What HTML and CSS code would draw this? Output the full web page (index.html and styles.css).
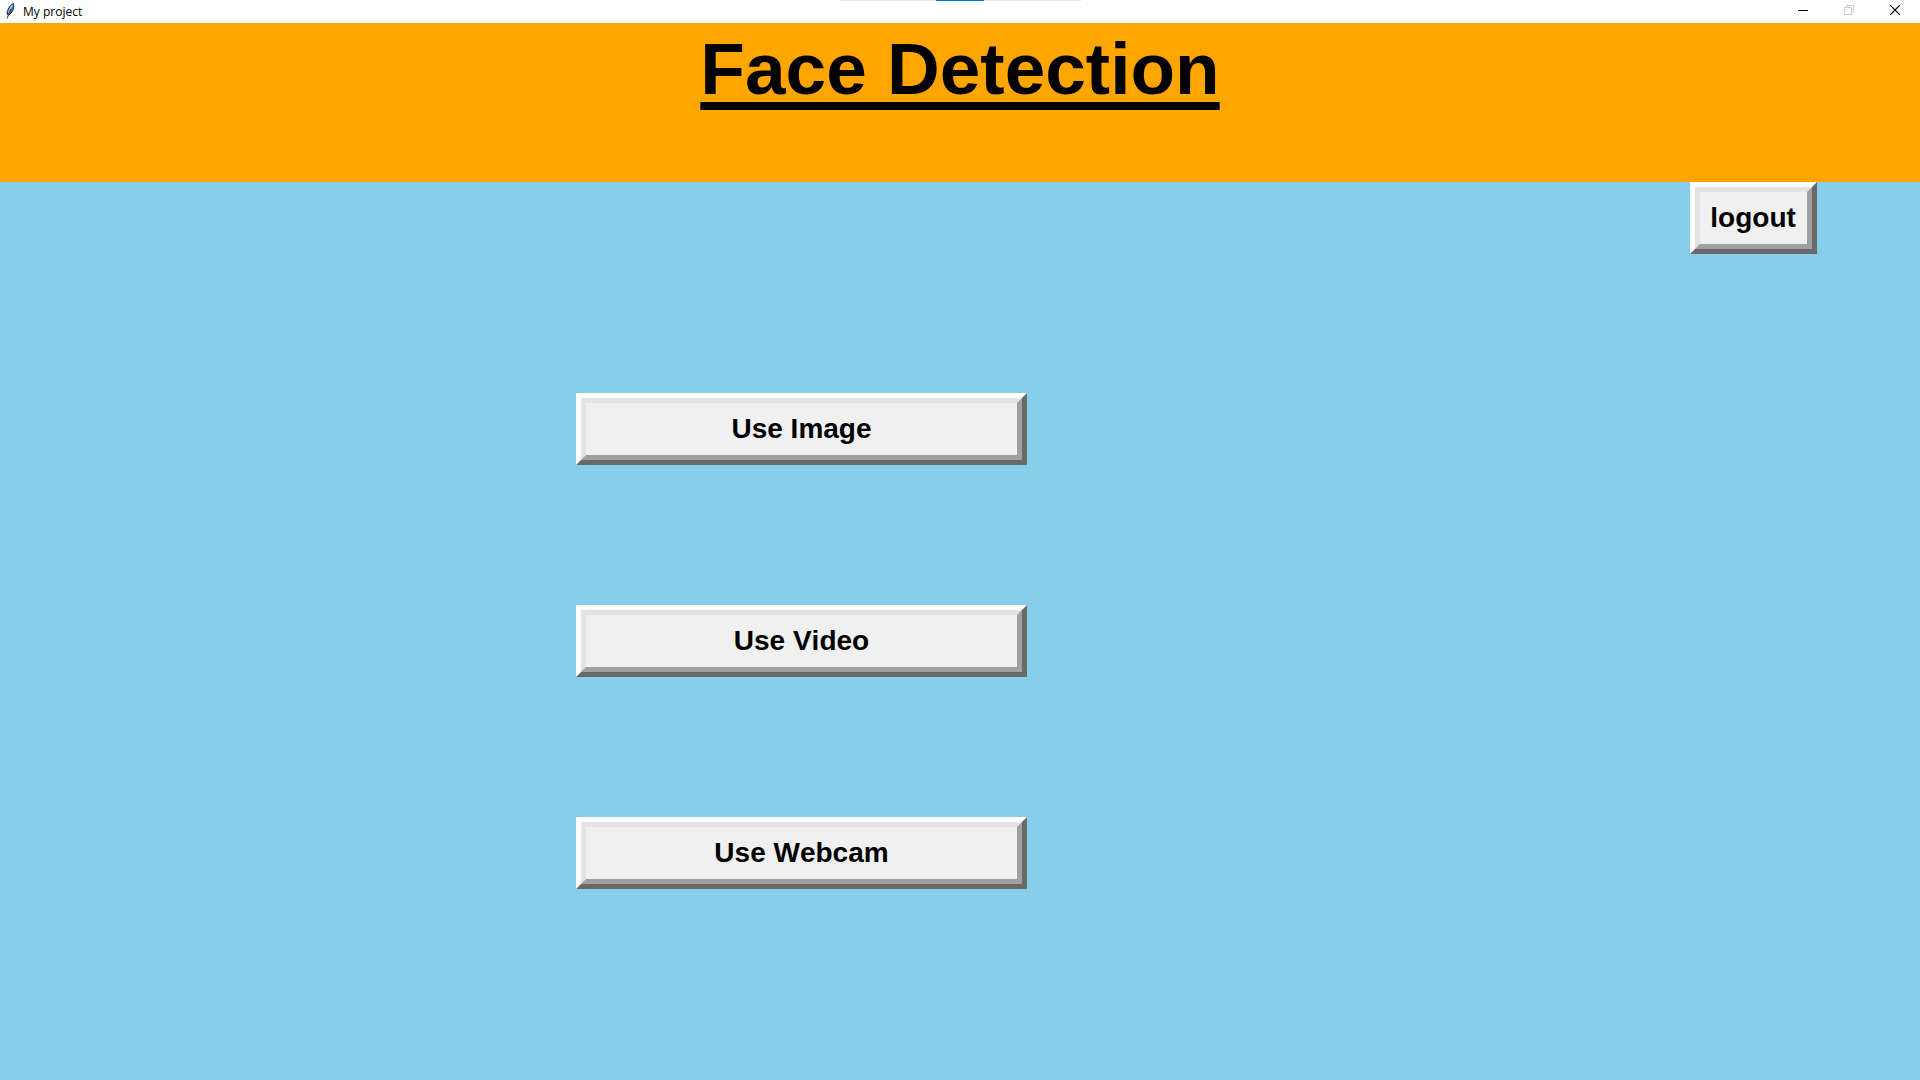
FILE: index.html
```html
<!DOCTYPE html>
<html lang="en">
<head>
<meta charset="utf-8">
<title>My project</title>
<link rel="stylesheet" href="styles.css">
</head>
<body>
<div class="window">
  <div class="titlebar">
    <div class="app">
      <svg class="app-icon" width="16" height="16" viewBox="0 0 16 16" aria-hidden="true">
        <path d="M11.500 .5C8 2 5.500 6 5 11L6.500 12C10 10 12.500 6 11.500 .5Z" fill="#3f78b4" stroke="#1a1f28" stroke-width="1"/>
        <path d="M10.500 2C8 5 7 8 6.500 10" fill="none" stroke="#9cc8ee" stroke-width="1.500"/>
        <path d="M9 6L5 15.500" fill="none" stroke="#333" stroke-width="1"/>
      </svg>
      <span class="caption">My project</span>
    </div>
    <div class="progress"><div class="progress-mark"></div></div>
    <div class="controls">
      <button class="control" type="button" aria-label="Minimize">
        <svg width="10" height="10" viewBox="0 0 10 10"><path d="M0 5.500H10" stroke="#000"/></svg>
      </button>
      <button class="control" type="button" aria-label="Restore" disabled>
        <svg width="10" height="10" viewBox="0 0 10 10" fill="none" stroke="#ccc"><path d="M.5 2.500H7.500V9.500H.5ZM2.500 2.500V.5H9.500V7.500H7.500"/></svg>
      </button>
      <button class="control" type="button" aria-label="Close">
        <svg width="10" height="10" viewBox="0 0 10 10"><path d="M0 0L10 10M10 0L0 10" stroke="#000" stroke-width="1.200"/></svg>
      </button>
    </div>
  </div>
  <header class="banner"><h1 class="title">Face Detection</h1></header>
  <main class="content">
    <button class="btn btn-logout" type="button"><span class="face">logout</span></button>
    <div class="choices">
      <button class="btn" type="button"><span class="face">Use Image</span></button>
      <button class="btn" type="button"><span class="face">Use Video</span></button>
      <button class="btn" type="button"><span class="face">Use Webcam</span></button>
    </div>
  </main>
</div>
</body>
</html>
```
FILE: styles.css
```css
* { box-sizing: border-box; }

body {
  margin: 0;
  background: skyblue;
  color: #000;
  font-family: "Liberation Sans", Arial, sans-serif;
}

.window {
  display: flex;
  flex-direction: column;
  min-height: 100vh;
}

.titlebar {
  display: grid;
  grid-template-columns: 1fr 241px 1fr;
  height: 23px;
  background: #fff;
}

.app {
  display: flex;
  gap: 5px;
  padding-left: 2px;
}

.app-icon { margin-top: 3px; }

.caption {
  font: 12px/23px "Open Sans", "Noto Sans", sans-serif;
}

.progress {
  height: 1px;
  background: #e6e6e6;
}

.progress-mark {
  width: 20%;
  height: 1px;
  margin-left: 40%;
  background: #0078d7;
}

.controls {
  display: flex;
  justify-content: flex-end;
  padding-right: 2px;
}

.control {
  display: flex;
  align-items: center;
  justify-content: center;
  width: 46px;
  height: 20px;
  padding: 0;
  border: 0;
  background: none;
}

.banner {
  height: 159px;
  background: orange;
  text-align: center;
}

.title {
  margin: 0;
  padding-top: 4px;
  font-size: 73px;
  line-height: 83px;
  font-weight: bold;
  font-kerning: none;
  text-decoration: underline;
  text-decoration-thickness: 8px;
  text-underline-offset: 8px;
  text-decoration-skip-ink: none;
}

.content {
  display: flex;
  flex-direction: column;
  flex: 1;
}

.btn {
  height: 72px;
  padding: 0;
  border: 5px solid;
  border-color: #fff #696969 #696969 #fff;
  background: #f0f0f0;
  color: #000;
  font-family: inherit;
  font-size: 28px;
  font-weight: bold;
  font-kerning: none;
}

.face {
  display: flex;
  align-items: center;
  justify-content: center;
  height: 100%;
  border: 5px solid;
  border-color: #e3e3e3 #a0a0a0 #a0a0a0 #e3e3e3;
}

.btn-logout {
  width: 127px;
  margin-left: 88%;
}

.choices {
  display: flex;
  flex-direction: column;
  gap: 140px;
  width: 451px;
  margin: 139px 0 0 30%;
}
```
